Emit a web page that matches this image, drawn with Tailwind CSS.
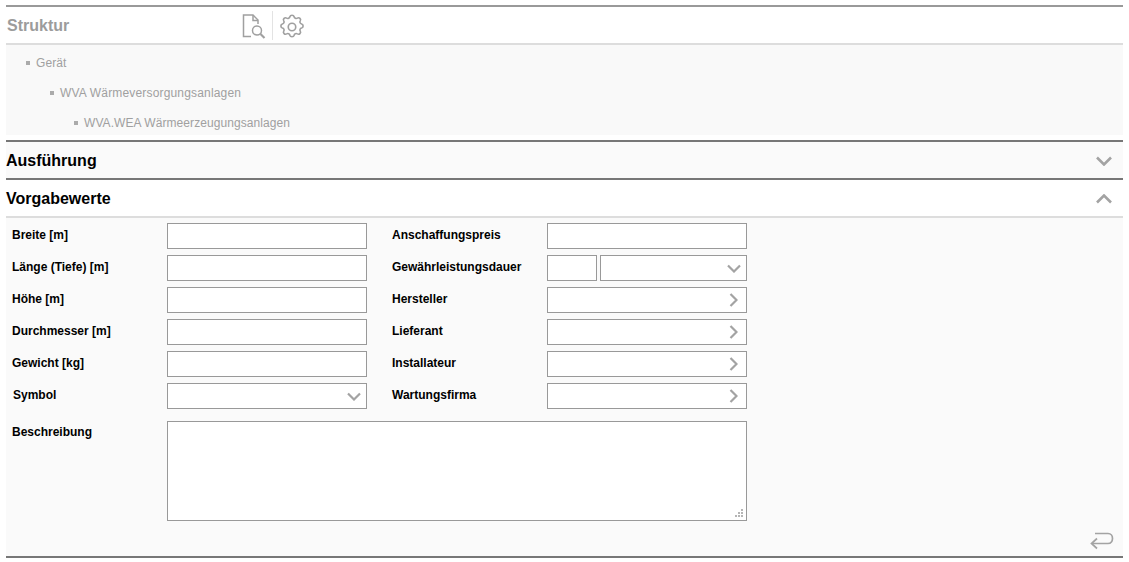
<!doctype html>
<html lang="de">
<head>
<meta charset="utf-8">
<script src="https://cdn.jsdelivr.net/npm/@tailwindcss/browser@4"></script>
</head>
<body class="bg-white font-['Liberation_Sans',Arial,sans-serif] overflow-hidden">
<div class="w-[1129px] h-[562px] px-[6px] pt-[5px]">
  <div class="h-[38px] border-t-2 border-[#999999] flex items-center bg-white">
    <div class="w-[233px] pl-px pt-[2px] text-[16px] font-bold text-[#9c9c9c]">Struktur</div>
    <div class="w-[34px] h-[29px] border-r border-[#e3e3e3] flex items-center">
      <svg width="26" height="26" viewBox="0 0 26 26" fill="none" stroke="#a0a0a0" stroke-width="1.5" class="ml-px mt-px">
        <path d="M11 23.5H3.5V2H13L18 7V11"/>
        <path d="M13 2V7.5H18"/>
        <circle cx="17" cy="17.5" r="4.5"/>
        <path d="M20.5 21L24.5 25" stroke-width="2.2"/>
      </svg>
    </div>
    <svg width="30" height="30" viewBox="0 0 24 24" fill="none" stroke="#a0a0a0" stroke-width="1.3" stroke-linejoin="round" class="ml-[4px] -my-[2px] mt-px">
      <path d="M10.3 2.3c.4-1.6 3-1.6 3.4 0a1.7 1.7 0 0 0 2.6 1.1c1.5-.9 3.2.8 2.3 2.3a1.7 1.7 0 0 0 1.1 2.6c1.6.4 1.6 3 0 3.4a1.7 1.7 0 0 0-1.1 2.6c.9 1.5-.8 3.2-2.3 2.3a1.7 1.7 0 0 0-2.6 1.1c-.4 1.6-3 1.6-3.4 0a1.7 1.7 0 0 0-2.6-1.1c-1.5.9-3.2-.8-2.3-2.3a1.7 1.7 0 0 0-1.1-2.6c-1.6-.4-1.6-3 0-3.4a1.7 1.7 0 0 0 1.1-2.6c-.9-1.5.8-3.2 2.3-2.3a1.7 1.7 0 0 0 2.6-1.1Z" transform="translate(0 1.6) scale(1 .96)"/>
      <circle cx="12" cy="12" r="3"/>
    </svg>
  </div>
  <div class="border-t-2 border-[#dddddd] h-[92px] bg-[#f9f9f9] text-[12px] text-[#a0a0a0]">
    <div class="h-[30px] pt-[5px] pl-[20px] flex items-center gap-[6px] leading-[16px] tracking-[.1px]"><span class="w-[4px] h-[4px] bg-[#ababab]"></span><span>Gerät</span></div>
    <div class="h-[30px] pl-[44px] flex items-center gap-[6px] pt-[5px] leading-[16px] tracking-[.17px]"><span class="w-[4px] h-[4px] bg-[#ababab]"></span><span>WVA Wärmeversorgungsanlagen</span></div>
    <div class="h-[30px] pl-[68px] flex items-center gap-[6px] pt-[5px] leading-[16px] tracking-[.07px]"><span class="w-[4px] h-[4px] bg-[#ababab]"></span><span>WVA.WEA Wärmeerzeugungsanlagen</span></div>
  </div>
  <div class="mt-[5px] h-[38px] pt-px border-t-2 border-[#777777] bg-[#fafafa] flex items-center justify-between text-[16px] font-bold text-black">
    <span>Ausführung</span>
    <svg width="16" height="10" viewBox="0 0 16 10" fill="none" stroke="#a3a3a3" stroke-width="2.6" class="mr-[11px]"><path d="M1 1.5L8 8.5L15 1.5"/></svg>
  </div>
  <div class="h-[38px] pt-px border-t-2 border-[#777777] bg-white flex items-center justify-between text-[16px] font-bold text-black">
    <span>Vorgabewerte</span>
    <svg width="16" height="10" viewBox="0 0 16 10" fill="none" stroke="#a3a3a3" stroke-width="2.6" class="mr-[11px]"><path d="M1 8.5L8 1.5L15 8.5"/></svg>
  </div>
  <div class="relative h-[342px] border-t-2 border-[#dddddd] border-b-2 border-b-[#777777] bg-[#fafafa] pt-[5px] text-[12px] font-bold text-black">
    <div class="grid grid-cols-[155px_200px_25px_155px_200px] gap-y-[6px] pl-[6px] w-[741px]">
      <label class="h-[26px] leading-[24px]">Breite [m]</label><div class="h-[26px] bg-white border border-[#999999]"></div><div></div>
      <label class="h-[26px] leading-[24px]">Anschaffungspreis</label><div class="h-[26px] bg-white border border-[#999999]"></div>

      <label class="h-[26px] leading-[24px]">Länge (Tiefe) [m]</label><div class="h-[26px] bg-white border border-[#999999]"></div><div></div>
      <label class="h-[26px] leading-[24px]">Gewährleistungsdauer</label>
      <div class="flex gap-[3px]">
        <div class="w-[50px] h-[26px] bg-white border border-[#999999]"></div>
        <div class="w-[147px] h-[26px] bg-white border border-[#999999] flex items-center justify-end pr-[5px]">
          <svg width="14" height="9" viewBox="0 0 14 9" fill="none" stroke="#a3a3a3" stroke-width="2.2"><path d="M1 1.5L7 7.5L13 1.5"/></svg>
        </div>
      </div>

      <label class="h-[26px] leading-[24px]">Höhe [m]</label><div class="h-[26px] bg-white border border-[#999999]"></div><div></div>
      <label class="h-[26px] leading-[24px]">Hersteller</label>
      <div class="h-[26px] bg-white border border-[#999999] flex items-center justify-end pr-[8px]"><svg width="9" height="14" viewBox="0 0 9 14" fill="none" stroke="#a3a3a3" stroke-width="2.2"><path d="M1.5 1L7.5 7L1.5 13"/></svg></div>

      <label class="h-[26px] leading-[24px]">Durchmesser [m]</label><div class="h-[26px] bg-white border border-[#999999]"></div><div></div>
      <label class="h-[26px] leading-[24px]">Lieferant</label>
      <div class="h-[26px] bg-white border border-[#999999] flex items-center justify-end pr-[8px]"><svg width="9" height="14" viewBox="0 0 9 14" fill="none" stroke="#a3a3a3" stroke-width="2.2"><path d="M1.5 1L7.5 7L1.5 13"/></svg></div>

      <label class="h-[26px] leading-[24px]">Gewicht [kg]</label><div class="h-[26px] bg-white border border-[#999999]"></div><div></div>
      <label class="h-[26px] leading-[24px]">Installateur</label>
      <div class="h-[26px] bg-white border border-[#999999] flex items-center justify-end pr-[8px]"><svg width="9" height="14" viewBox="0 0 9 14" fill="none" stroke="#a3a3a3" stroke-width="2.2"><path d="M1.5 1L7.5 7L1.5 13"/></svg></div>

      <label class="h-[26px] leading-[24px] pl-px">Symbol</label>
      <div class="h-[26px] bg-white border border-[#999999] flex items-center justify-end pr-[5px]"><svg width="14" height="9" viewBox="0 0 14 9" fill="none" stroke="#a3a3a3" stroke-width="2.2"><path d="M1 1.5L7 7.5L13 1.5"/></svg></div><div></div>
      <label class="h-[26px] leading-[24px]">Wartungsfirma</label>
      <div class="h-[26px] bg-white border border-[#999999] flex items-center justify-end pr-[8px]"><svg width="9" height="14" viewBox="0 0 9 14" fill="none" stroke="#a3a3a3" stroke-width="2.2"><path d="M1.5 1L7.5 7L1.5 13"/></svg></div>

      <label class="mt-[5px] leading-[24px]">Beschreibung</label>
      <div class="col-span-4 mt-[6px] w-[580px] h-[100px] bg-white border border-[#999999] relative">
        <svg width="9" height="9" viewBox="0 0 9 9" fill="#b5b5b5" class="absolute right-[2px] bottom-[2px]">
          <rect x="6" y="0" width="2" height="2"/><rect x="3" y="3" width="2" height="2"/><rect x="6" y="3" width="2" height="2"/><rect x="0" y="6" width="2" height="2"/><rect x="3" y="6" width="2" height="2"/><rect x="6" y="6" width="2" height="2"/>
        </svg>
      </div>
    </div>
    <svg width="24" height="18" viewBox="0 0 24 18" fill="none" stroke="#a3a3a3" stroke-width="1.7" class="absolute right-[9px] bottom-[6px]">
      <path d="M5 1.5H18C24 1.5 24 11.5 18 11.5H2"/>
      <path d="M7 6.5L1.5 11.5L7 16.5"/>
    </svg>
  </div>
</div>
</body>
</html>
